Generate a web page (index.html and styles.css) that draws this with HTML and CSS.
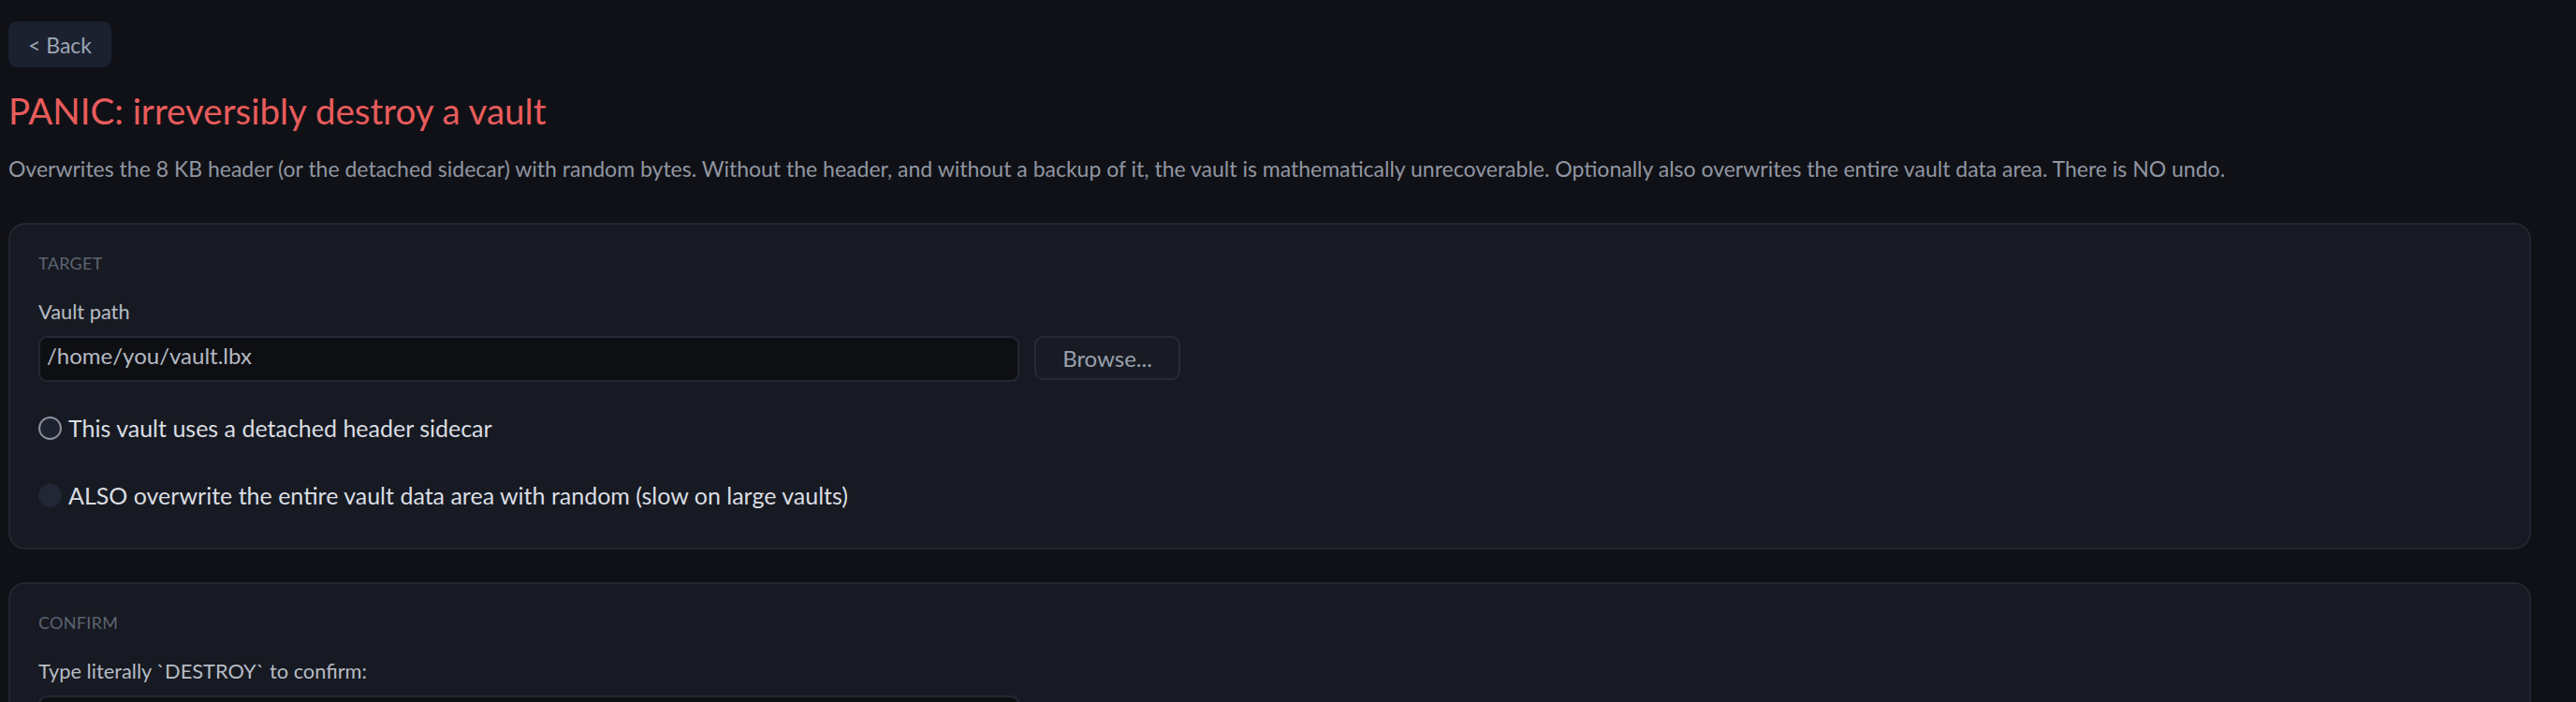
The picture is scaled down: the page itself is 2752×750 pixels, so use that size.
FILE: index.html
```html
<!DOCTYPE html>
<html lang="en">
<head>
<meta charset="utf-8">
<title>PANIC: irreversibly destroy a vault</title>
<link rel="stylesheet" href="styles.css">
</head>
<body>
<div class="page">
  <button class="back-btn" type="button">&lt; Back</button>
  <h1 class="title">PANIC: irreversibly destroy a vault</h1>
  <p class="desc">Overwrites the 8 KB header (or the detached sidecar) with random bytes. Without the header, and without a backup of it, the vault is mathematically unrecoverable. Optionally also overwrites the entire vault data area. There is NO undo.</p>

  <section class="card">
    <div class="section-label">TARGET</div>
    <div class="field-label">Vault path</div>
    <div class="path-row">
      <div class="text-input">/home/you/vault.lbx</div>
      <button class="ghost-btn" type="button">Browse...</button>
    </div>
    <div class="options">
      <div class="radio-row"><span class="radio"></span><span>This vault uses a detached header sidecar</span></div>
      <div class="radio-row"><span class="radio radio-dim"></span><span>ALSO overwrite the entire vault data area with random (slow on large vaults)</span></div>
    </div>
  </section>

  <section class="card">
    <div class="section-label">CONFIRM</div>
    <div class="field-label">Type literally `DESTROY` to confirm:</div>
    <div class="path-row">
      <div class="text-input"></div>
    </div>
  </section>
</div>
</body>
</html>
```

FILE: styles.css
```css
* { box-sizing: border-box; }

html, body {
  margin: 0;
  padding: 0;
  background: #101116;
}

body {
  font-family: Lato, "Noto Sans", "Liberation Sans", sans-serif;
  color: #c9cdd4;
}

.page {
  padding: 23px 48px 40px 9px;
}

.back-btn {
  display: block;
  height: 49px;
  width: 110px;
  padding: 0;
  border: 0;
  border-radius: 9px;
  background: #1c2130;
  color: #9ea6b4;
  font-family: inherit;
  font-size: 23px;
}

.title {
  margin: 24px 0 0;
  font-size: 38.5px;
  line-height: 44px;
  font-weight: 400;
  color: #e85c5c;
}

.desc {
  margin: 25px 0 0;
  font-size: 23px;
  line-height: 30px;
  color: #9096a2;
}

.card {
  margin-top: 43px;
  padding: 30px 30px 41px;
  border: 2px solid #222631;
  border-radius: 18px;
  background: #171a22;
}

.card + .card {
  margin-top: 35px;
}

.section-label {
  font-size: 18px;
  line-height: 22px;
  color: #5d6471;
  letter-spacing: 0.3px;
}

.field-label {
  margin-top: 28px;
  font-size: 21.8px;
  line-height: 26px;
  color: #b7bcc5;
}

.path-row {
  display: flex;
  gap: 16px;
  margin-top: 13px;
}

.text-input {
  width: 1048px;
  height: 49px;
  padding: 4px 7px 0;
  border: 2px solid #242833;
  border-radius: 9px;
  background: #0e0f13;
  color: #b5bac3;
  font-size: 24px;
  line-height: 30px;
}

.ghost-btn {
  width: 156px;
  height: 47px;
  padding: 0;
  border: 2px solid #262a36;
  border-radius: 9px;
  background: #181b24;
  color: #9aa1ad;
  font-family: inherit;
  font-size: 24px;
}

.options {
  display: flex;
  flex-direction: column;
  gap: 42px;
  margin-top: 34px;
}

.radio-row {
  display: flex;
  align-items: center;
  gap: 7px;
  height: 30px;
  font-size: 25px;
  color: #dadde2;
}

.radio {
  flex: none;
  width: 25px;
  height: 25px;
  border-radius: 50%;
  border: 2px solid #8a909b;
  background: #1d2130;
}

.radio-dim {
  border-color: #222735;
  background: #222735;
}
```
